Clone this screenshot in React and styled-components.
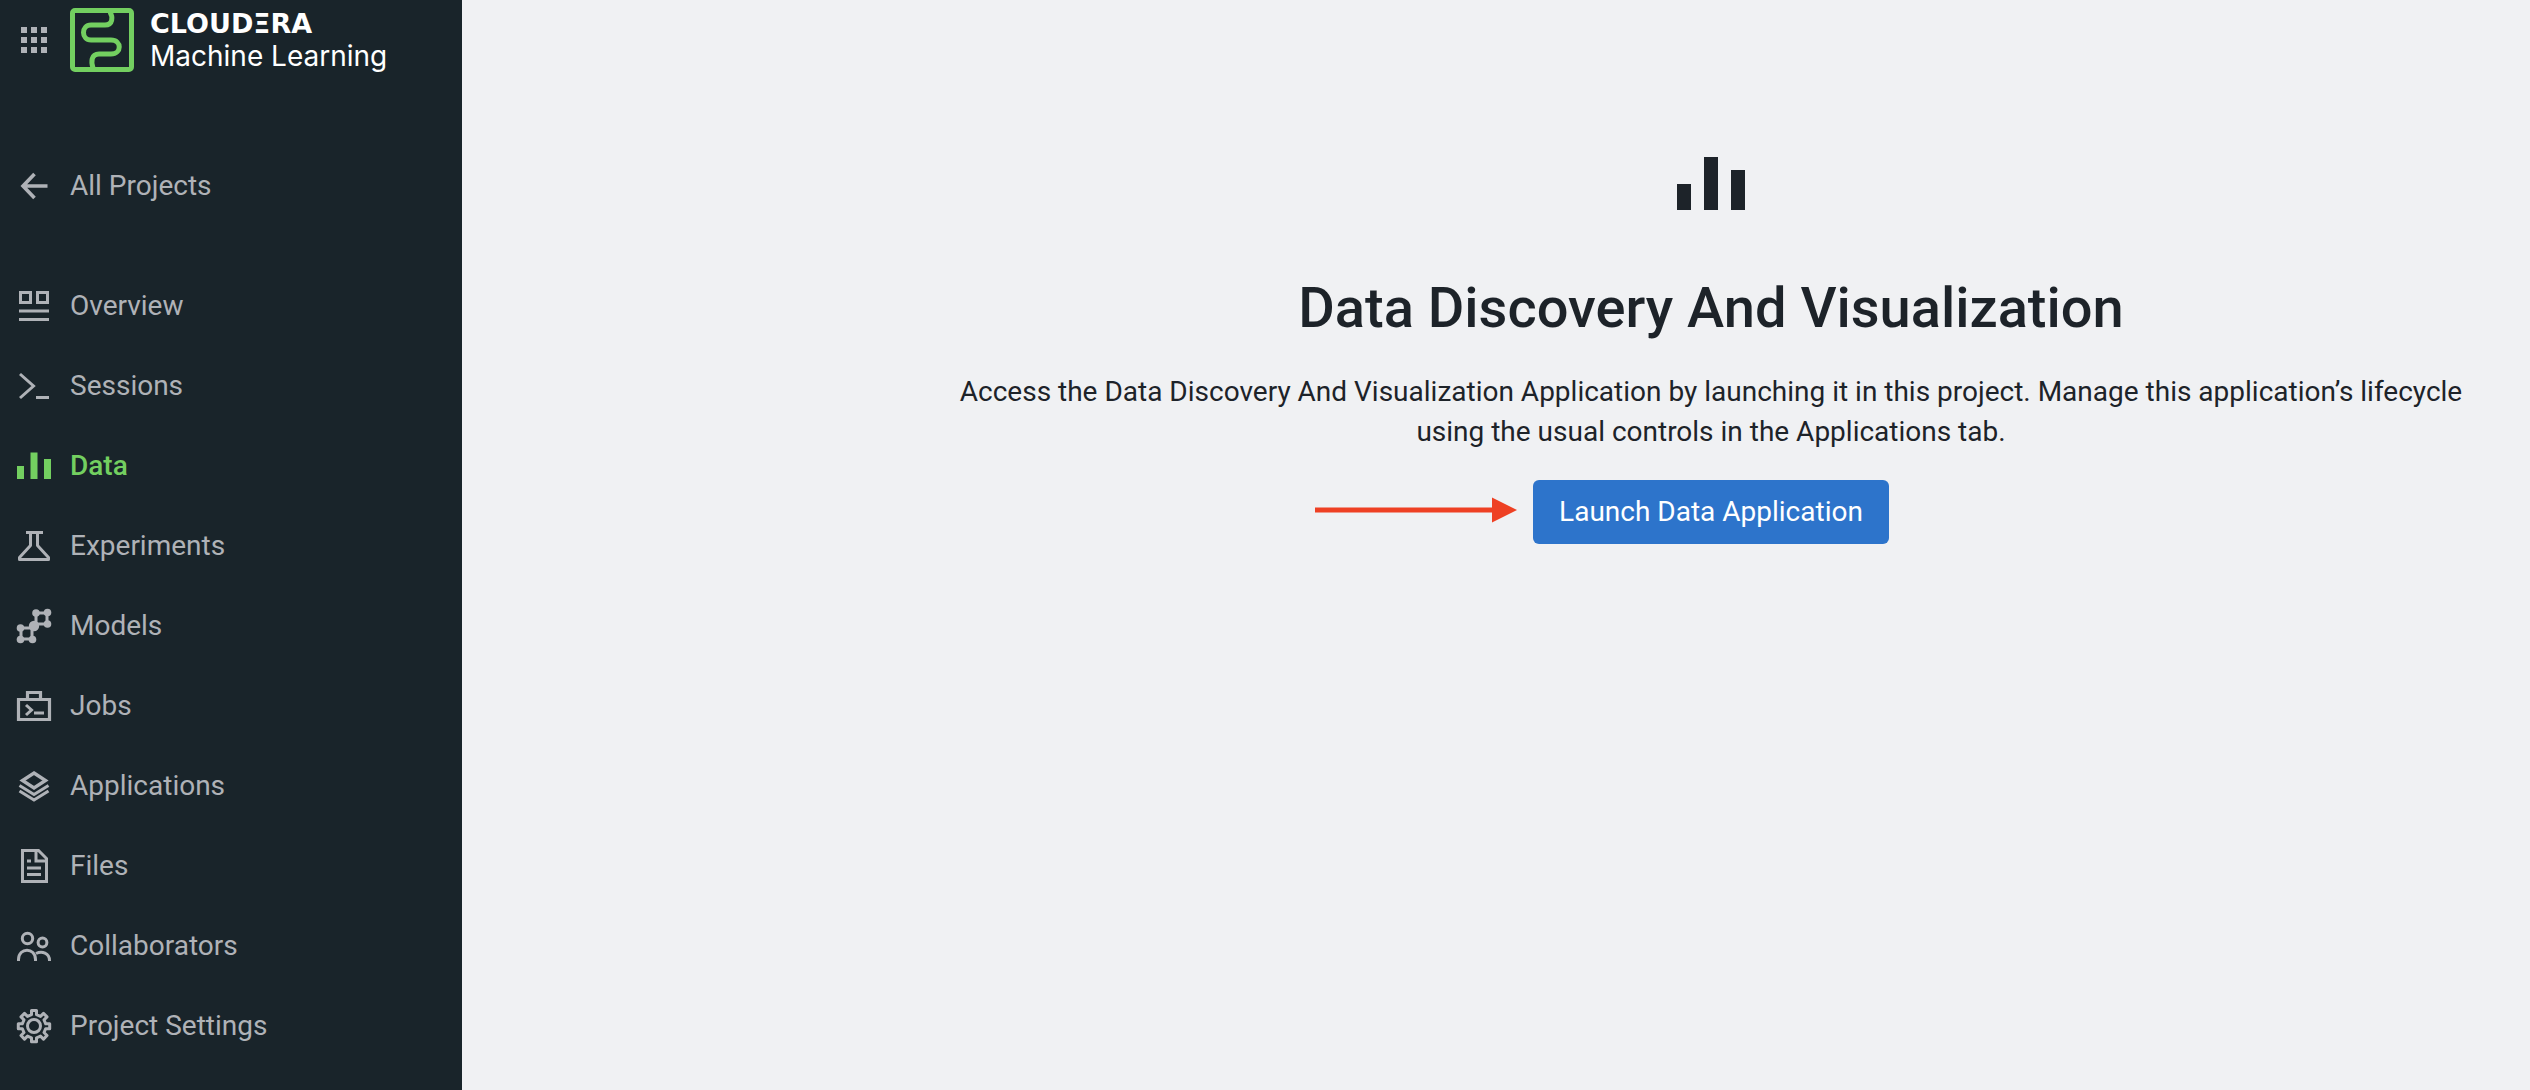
import React from "react";
import styled, { createGlobalStyle } from "styled-components";

const GlobalStyle = createGlobalStyle`
  *, *::before, *::after { box-sizing: border-box; }
  body {
    margin: 0;
    background: #f0f1f3;
    color: #1d2329;
    font-family: Roboto, "Liberation Sans", sans-serif;
    font-size: 28px;
    line-height: 40px;
  }
`;

const Shell = styled.div`
  display: flex;
  min-height: 100vh;
`;

const Sidebar = styled.aside`
  flex: 0 0 462px;
  background: #19242a;
`;

const Brand = styled.header`
  display: flex;
  align-items: center;
  gap: 16px;
  height: 80px;
  padding: 0 14px;
`;

const AppsButton = styled.button`
  display: flex;
  padding: 0;
  border: 0;
  background: none;
  color: #afb2b7;
`;

const BrandLink = styled.a`
  display: flex;
  gap: 16px;
  color: #fff;
  text-decoration: none;
`;

const BrandText = styled.span`
  display: flex;
  flex-direction: column;
`;

const Company = styled.span`
  font-family: "DejaVu Sans", sans-serif;
  font-size: 27px;
  font-weight: 700;
  line-height: 32px;
`;

const Product = styled.span`
  font-family: Inter, sans-serif;
  font-size: 28px;
  line-height: 32px;
`;

const Nav = styled.nav`
  display: flex;
  flex-direction: column;
  padding-top: ${(p) => p.$top}px;
`;

const NavLink = styled.a`
  display: flex;
  align-items: center;
  gap: 16px;
  height: 80px;
  padding: 0 14px;
  color: ${(p) => (p.$active ? "#73cf60" : "#afb2b7")};
  font-weight: ${(p) => (p.$active ? 500 : 400)};
  text-decoration: none;
`;

const Main = styled.main`
  flex: 1;
  display: flex;
  flex-direction: column;
  align-items: flex-end;
  padding: 144px 60px 0;
`;

const Panel = styled.section`
  display: flex;
  flex-direction: column;
  align-items: center;
  width: 100%;
  max-width: 1518px;
  text-align: center;
`;

const Title = styled.h1`
  margin: 48px 0 28px;
  font-size: 56px;
  font-weight: 500;
  line-height: 72px;
`;

const Description = styled.p`
  margin: 0 0 28px;
`;

const Action = styled.div`
  position: relative;
`;

const Pointer = styled.svg`
  position: absolute;
  right: calc(100% + 16px);
  top: 16px;
`;

const LaunchButton = styled.button`
  height: 64px;
  padding: 0 26px;
  border: 0;
  border-radius: 6px;
  background: #2d74cb;
  color: #fff;
  font: inherit;
`;

const icons = {
  grid: (
    <path
      fill="currentColor"
      d="M7 7h6v6H7zM17 7h6v6h-6zM27 7h6v6h-6zM7 17h6v6H7zM17 17h6v6h-6zM27 17h6v6h-6zM7 27h6v6H7zM17 27h6v6h-6zM27 27h6v6h-6z"
    />
  ),
  back: <path d="M33.5 20H9.500M20.500 8 9 20l11.500 12" strokeWidth="3.600" />,
  overview: (
    <path d="M6.500 6.500h10v10h-10zM23.500 6.500h10v10h-10zM5 25h30M5 33.500h30" />
  ),
  sessions: <path d="m6 8 13.500 12L6 32M22 31.500h13" />,
  data: (
    <path fill="currentColor" stroke="none" d="M3 20h7v13H3zM16.500 6.500h7V33h-7zM30 13h7v20h-7z" />
  ),
  experiments: (
    <path strokeLinejoin="round" d="M12 6.500h17M16.500 7v12.500L5.500 31.500v2h29v-2L23.500 19.500V7" />
  ),
  models: (
    <>
      <path d="M22 7h11v11H22zM7 22h11v11H7zM18 22l4-4" strokeWidth="3" />
      <g fill="currentColor" stroke="none">
        <circle cx="22" cy="7" r="3.800" />
        <circle cx="33.500" cy="6.500" r="3.800" />
        <circle cx="33.500" cy="18" r="3.800" />
        <circle cx="20" cy="20" r="5.200" />
        <circle cx="6.500" cy="22" r="3.800" />
        <circle cx="6.500" cy="33.500" r="3.800" />
        <circle cx="18.500" cy="33.500" r="3.800" />
      </g>
    </>
  ),
  jobs: (
    <>
      <path d="M4.500 13.500h31v20h-31zM13.500 13V6.500h13V13" strokeWidth="3.200" />
      <path d="m12 19 5.500 5-5.500 5M20 27h10" />
    </>
  ),
  applications: (
    <>
      <path d="m20 7 11.500 7.500L20 22 8.500 14.500z" strokeWidth="3.400" />
      <path d="m5.500 19.500 14.500 9 14.500-9M5.500 25 20 34l14.500-9" />
    </>
  ),
  files: (
    <>
      <path d="M8.500 4.500h16l8 8v23h-24zM22 5v10h10" />
      <path d="M13 15h4M13 22h14M13 28.500h14" />
    </>
  ),
  collaborators: (
    <>
      <circle cx="13.500" cy="12.500" r="5.200" />
      <circle cx="28.500" cy="16.500" r="4.400" />
      <path d="M4.500 35v-1.500c0-12.500 17-12.500 17 0V35M22 27.500c6-3 13.500-.5 13.500 7V35" />
    </>
  ),
  settings: (
    <>
      <circle cx="20" cy="20" r="6.500" />
      <path
        strokeLinejoin="round"
        d="M17.500 4.500h5v4.200l4 1.700 3-3 3.500 3.500-3 3 1.700 3.900h4v4.900h-4l-1.700 3.800 3 3-3.500 3.600-3-3-4 1.700v4h-5v-4l-4-1.700-3 3L7 29.500l3-3-1.700-3.800h-4v-4.900h4l1.700-3.900-3-3 3.500-3.500 3 3 4-1.700z"
      />
    </>
  ),
};

function Icon({ name, size = 40 }) {
  return (
    <svg
      width={size}
      height={size}
      viewBox="0 0 40 40"
      fill="none"
      stroke={name === "grid" ? "none" : "currentColor"}
      strokeWidth="3"
      aria-hidden="true"
    >
      {icons[name]}
    </svg>
  );
}

function Logo() {
  return (
    <svg width="64" height="64" viewBox="0 0 64 64" fill="none" stroke="#73cf60" strokeWidth="5" aria-hidden="true">
      <rect x="2.500" y="2.500" width="59" height="59" rx="2.500" />
      <path d="M40 4c3 5 3 13-5 13H21c-10 0-10 15 0 15h20c11 0 11 14 0 14H29c-8 0-8 8-6 14" />
    </svg>
  );
}

const links = [
  ["overview", "Overview"],
  ["sessions", "Sessions"],
  ["data", "Data"],
  ["experiments", "Experiments"],
  ["models", "Models"],
  ["jobs", "Jobs"],
  ["applications", "Applications"],
  ["files", "Files"],
  ["collaborators", "Collaborators"],
  ["settings", "Project Settings"],
];

export default function App() {
  return (
    <>
      <GlobalStyle />
      <Shell>
        <Sidebar>
          <Brand>
            <AppsButton aria-label="Switch application">
              <Icon name="grid" />
            </AppsButton>
            <BrandLink href="#home" aria-label="Cloudera Machine Learning">
              <Logo />
              <BrandText>
                <Company>CLOUDΞRA</Company>
                <Product>Machine Learning</Product>
              </BrandText>
            </BrandLink>
          </Brand>
          <Nav $top={66} aria-label="Projects">
            <NavLink href="#projects">
              <Icon name="back" />
              All Projects
            </NavLink>
          </Nav>
          <Nav $top={40} aria-label="Project">
            {links.map(([id, label]) => (
              <NavLink key={id} href={`#${id}`} $active={id === "data"} aria-current={id === "data" ? "page" : undefined}>
                <Icon name={id} />
                {label}
              </NavLink>
            ))}
          </Nav>
        </Sidebar>
        <Main>
          <Panel>
            <Icon name="data" size={80} />
            <Title>Data Discovery And Visualization</Title>
            <Description>
              Access the Data Discovery And Visualization Application by launching it in this project. Manage this
              application’s lifecycle using the usual controls in the Applications tab.
            </Description>
            <Action>
              <Pointer width="202" height="28" viewBox="0 0 202 28" aria-hidden="true">
                <path fill="#ee4023" d="M0 11.500h177V1.500l25 12.500-25 12.500V16.500H0z" />
              </Pointer>
              <LaunchButton>Launch Data Application</LaunchButton>
            </Action>
          </Panel>
        </Main>
      </Shell>
    </>
  );
}
